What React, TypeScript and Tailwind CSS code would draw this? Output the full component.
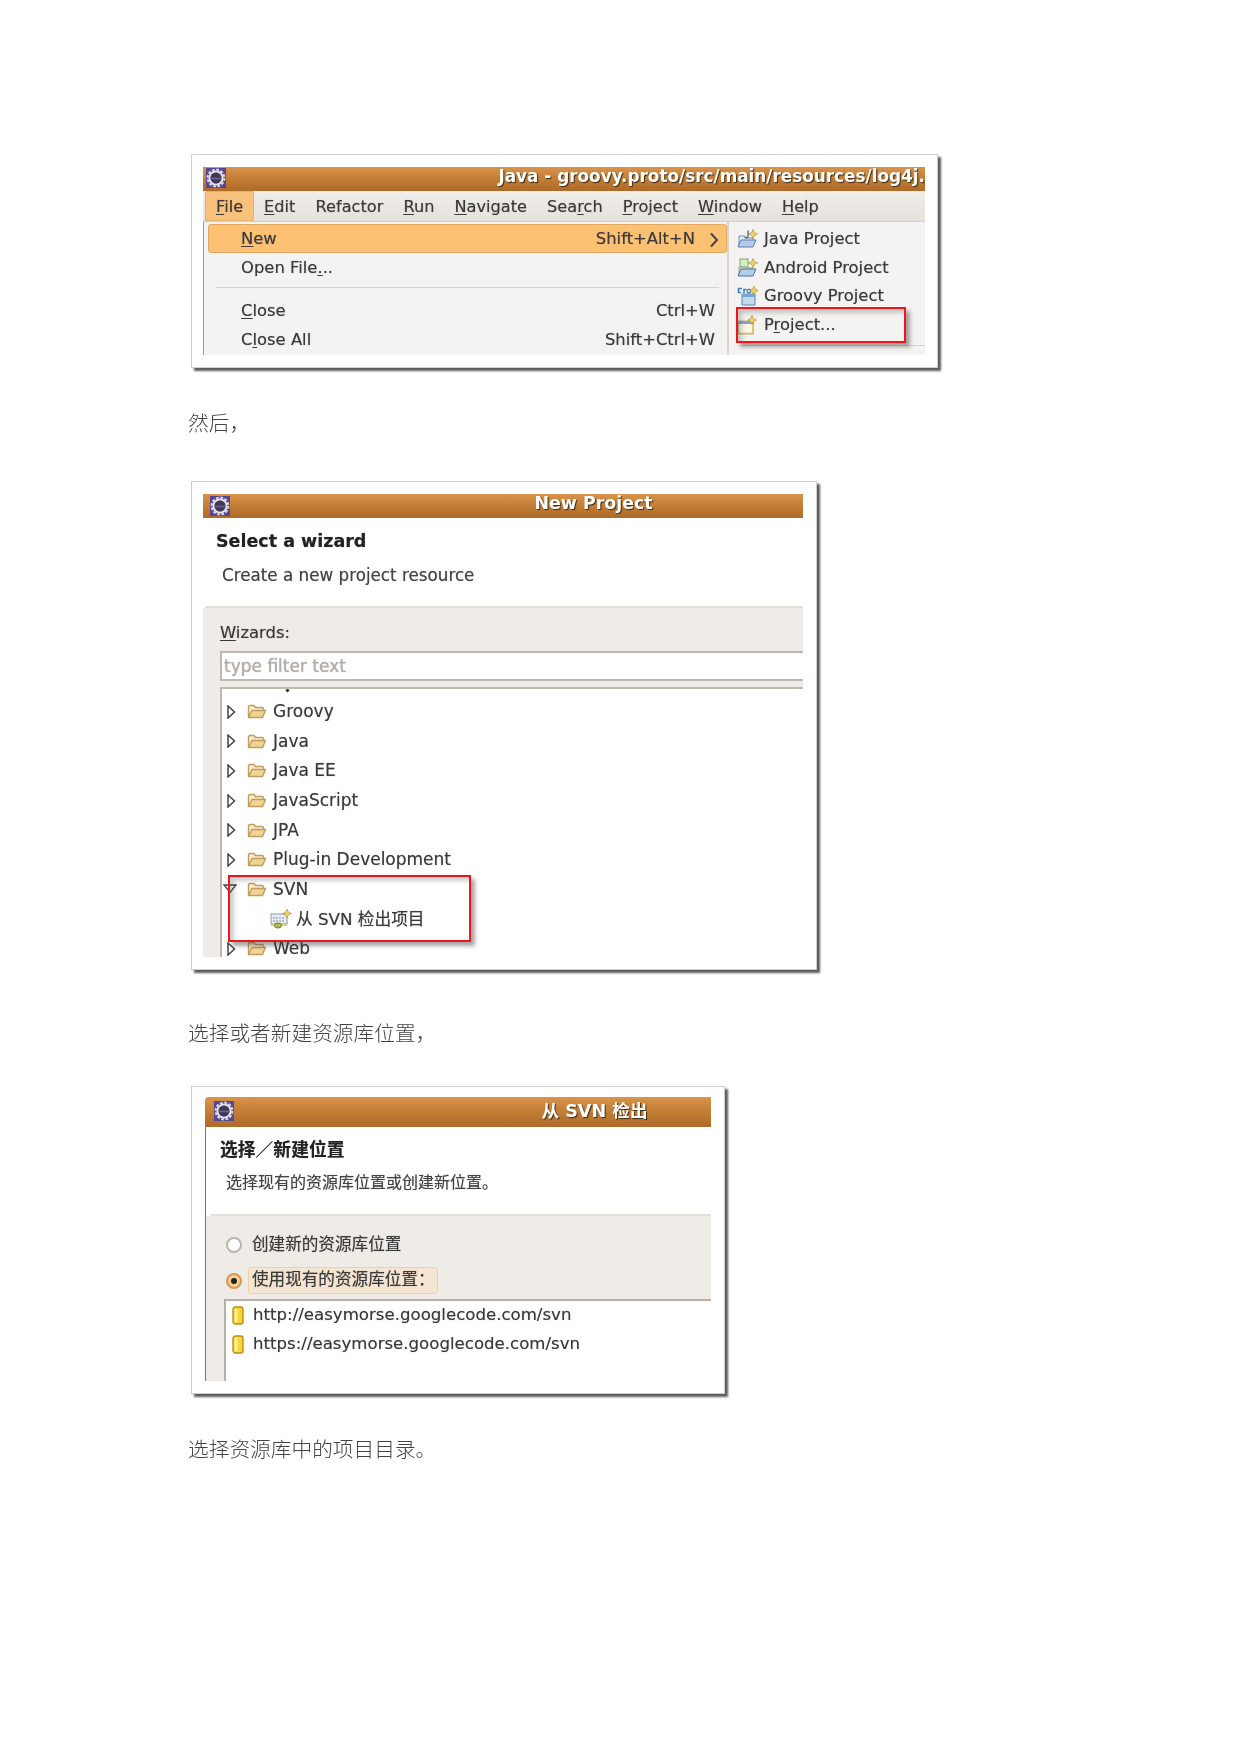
const ui = "font-['DejaVu_Sans','Noto_Sans_CJK_SC',sans-serif] [text-shadow:0_0_1px_rgba(60,60,60,0.55)]";

const GearIcon = () => (
  <svg width="20" height="20" viewBox="0 0 20 20" className="shrink-0">
    <rect width="20" height="20" fill="#5a4594" />
    <circle cx="10" cy="10" r="8.4" fill="none" stroke="#d9d9e0" strokeWidth="2" strokeDasharray="2.8 1.6" />
    <circle cx="10" cy="10" r="6.6" fill="none" stroke="#e6e6ea" strokeWidth="2" />
    <circle cx="10" cy="10" r="5.4" fill="#3d3a52" />
    <path d="M5 10.5h10" stroke="#6f609e" strokeWidth="1.6" />
  </svg>
);

const Spark = ({ x, y }: { x: number; y: number }) => (
  <path
    transform={`translate(${x} ${y})`}
    d="M0-4.5 1.4-1.4 4.5 0 1.4 1.4 0 4.5-1.4 1.4-4.5 0-1.4-1.4Z"
    fill="#f2d264"
    stroke="#a98a2e"
    strokeWidth=".6"
  />
);

const JavaProjectIcon = () => (
  <svg width="21" height="20" viewBox="0 0 21 20" className="shrink-0">
    <path d="M2 7h6l1 2h7v8H2Z" fill="#e6edf6" stroke="#6f8db5" />
    <path d="M1 18 4 11h15l-3 7Z" fill="#b5cce8" stroke="#5b7fae" />
    <path d="M11 1.5v6q0 2-3.5 1" fill="none" stroke="#4b6fa6" strokeWidth="1.5" />
    <Spark x={16} y={5} />
  </svg>
);

const AndroidProjectIcon = () => (
  <svg width="21" height="20" viewBox="0 0 21 20" className="shrink-0">
    <rect x="3" y="1" width="8" height="8" fill="#d8ecc8" stroke="#78a860" />
    <path d="M2 9h6l1 1h7v7H2Z" fill="#f0dc9a" stroke="#8a9fb8" />
    <path d="M1 18 4 11h15l-3 7Z" fill="#b5cce8" stroke="#4f72a3" />
    <Spark x={16} y={5} />
  </svg>
);

const GroovyProjectIcon = () => (
  <svg width="21" height="20" viewBox="0 0 21 20" className="shrink-0">
    <path d="M5 8h13v11H5Z" fill="#c4daf0" stroke="#5f86b2" />
    <path d="M5 8h13v3H5Z" fill="#7aa6d4" />
    <path d="M5 2.5H1.5v4H4M7 7V3.5h2.5" fill="none" stroke="#3d7fc4" strokeWidth="1.5" />
    <circle cx="12" cy="5" r="1.8" fill="none" stroke="#3d7fc4" strokeWidth="1.3" />
    <Spark x={17} y={4.5} />
  </svg>
);

const NewProjectIcon = () => (
  <svg width="21" height="20" viewBox="0 0 21 20" className="shrink-0">
    <rect x="1.5" y="6" width="15" height="13" fill="#fbf6e2" stroke="#b5b09a" />
    <rect x="1.5" y="6" width="15" height="3" fill="#8fa3bb" />
    <path d="M2 18.5h14M16 9v9" stroke="#d8c25a" strokeWidth="1.5" />
    <Spark x={15} y={5} />
  </svg>
);

const SvnIcon = () => (
  <svg width="22" height="20" viewBox="0 0 22 20" className="shrink-0">
    <rect x="1" y="5" width="16" height="10" fill="#e6edf4" stroke="#8b9aa8" />
    <path d="M3 9h12M3 12h12" stroke="#7d93ab" strokeDasharray="2 1" />
    <path d="M1 15h16v2H1Z" fill="#d6d27e" />
    <ellipse cx="8" cy="16.5" rx="3.5" ry="2.5" fill="#b4bb50" stroke="#6f7530" />
    <Spark x={17} y={4.5} />
  </svg>
);

const RepoIcon = () => (
  <svg width="12" height="19" viewBox="0 0 12 19" className="shrink-0">
    <rect x="1" y="1" width="10" height="17" rx="2.5" fill="#f6d733" stroke="#c98a18" strokeWidth="1.4" />
    <rect x="2.5" y="2.5" width="3" height="14" rx="1.5" fill="#fdf0a0" />
  </svg>
);

const FolderIcon = () => (
  <svg width="20" height="15" viewBox="0 0 20 15" className="shrink-0">
    <path d="M1.5 13V3q0-1.5 1.5-1.5h4L8.5 3.5H15q1.5 0 1.5 1.5v1" fill="#f8ebce" stroke="#c29c5c" strokeWidth="1.4" />
    <path d="M1.5 13.5 5 6.5h13.5L15.5 13.5Z" fill="#f0d496" stroke="#c29c5c" strokeWidth="1.4" strokeLinejoin="round" />
  </svg>
);

const Arrow = ({ open }: { open?: boolean }) =>
  open ? (
    <svg width="14" height="10" viewBox="0 0 14 10" className="shrink-0 ml-[-3px] mr-[2px]">
      <path d="M1 1h12L7 8.5Z" fill="#fff" stroke="#444" strokeWidth="1.3" />
    </svg>
  ) : (
    <svg width="9" height="14" viewBox="0 0 9 14" className="shrink-0 mx-[1px]">
      <path d="M1 1v12l6.5-6Z" fill="#fff" stroke="#444" strokeWidth="1.5" />
    </svg>
  );

const Mn = ({ children }: { children: string }) => (
  <span className="underline underline-offset-2">{children}</span>
);

const Shot = ({ className, children }: { className: string; children: React.ReactNode }) => (
  <div className={`border border-[#cfcfcf] bg-white shadow-[3px_3px_2px_#5c5c5c] ${className}`}>
    <div className="blur-[0.6px]">{children}</div>
  </div>
);

const TitleBar = ({ title, className }: { title: string; className: string }) => (
  <div className={`flex items-center bg-gradient-to-b from-[#d9934a] via-[#c27d36] to-[#ad6a29] ${className}`}>
    <GearIcon />
    <div className="flex-1 min-w-0 whitespace-nowrap text-center font-bold text-white [text-shadow:1px_1px_1px_#3d2a12]">
      {title}
    </div>
  </div>
);

const RedBox = ({ className }: { className: string }) => (
  <div className={`absolute border-[2px] border-[#f2141c] shadow-[4px_4px_4px_rgba(60,60,60,0.45),inset_4px_4px_4px_rgba(60,60,60,0.25)] ${className}`} />
);

const menus = [
  ["F", "ile"],
  ["E", "dit"],
  ["", "Refactor"],
  ["R", "un"],
  ["N", "avigate"],
  ["", "Sea", "r", "ch"],
  ["P", "roject"],
  ["W", "indow"],
  ["H", "elp"],
];

const submenu = [
  { icon: <JavaProjectIcon />, label: "Java Project" },
  { icon: <AndroidProjectIcon />, label: "Android Project" },
  { icon: <GroovyProjectIcon />, label: "Groovy Project" },
];

const folders = ["Groovy", "Java", "Java EE", "JavaScript", "JPA", "Plug-in Development"];

const MenuWindow = () => (
  <Shot className="w-[747px] h-[214px] px-[11px] pt-[12px]">
    <div className={`relative w-[722px] text-[16.4px] leading-none text-[#3a3a3a] ${ui}`}>
      <TitleBar
        title="Java - groovy.proto/src/main/resources/log4j."
        className="h-[24px] pl-[3px] text-[16.85px] [&>div]:pb-[6px] [&>div]:text-right [&>svg]:mb-[3px]"
      />
      <div className="flex h-[31px] items-center border-b border-[#d5cfc8] bg-gradient-to-b from-[#f1eeea] to-[#e6e1db] pl-[2px] text-[16.2px]">
        {menus.map(([mn, rest, mn2, rest2], i) => (
          <div
            key={i}
            className={`flex h-full items-center px-[10px] pt-[2px] ${i === 0 ? "rounded-t-[2px] border border-[#e9b06a] bg-[#f8c27d]" : ""}`}
          >
            <span>
              {mn && <Mn>{mn}</Mn>}
              {rest}
              {mn2 && <Mn>{mn2}</Mn>}
              {rest2}
            </span>
          </div>
        ))}
      </div>
      <div className="flex h-[133px] bg-[#f5f3f1]">
        <div className="w-[524px] border-l border-[#9a9792] pl-[4px] pt-[2px]">
          <div className="flex h-[29px] items-center rounded-[3px] border border-[#e0a860] bg-[#fcc173] pl-[32px] pt-[2px]">
            <span><Mn>N</Mn>ew</span>
            <span className="ml-auto">Shift+Alt+N</span>
            <svg width="10" height="16" viewBox="0 0 10 16" className="ml-[14px] mr-[7px]">
              <path d="M2 1.5 8 8l-6 6.5" fill="none" stroke="#444" strokeWidth="2" />
            </svg>
          </div>
          <div className="flex h-[29px] items-center pl-[33px] pt-[2px]">Open File<Mn>.</Mn>..</div>
          <div className="mx-[8px] mt-[5px] mb-[8px] h-px bg-[#d8d2cc]" />
          <div className="flex h-[29px] items-center pl-[33px] pr-[12px] pt-[2px]">
            <span><Mn>C</Mn>lose</span>
            <span className="ml-auto">Ctrl+W</span>
          </div>
          <div className="flex h-[27px] items-center pl-[33px] pr-[12px] pt-[3px]">
            <span>C<Mn>l</Mn>ose All</span>
            <span className="ml-auto">Shift+Ctrl+W</span>
          </div>
        </div>
        <div className="flex-1 border-l-[2px] border-[#d9d4cf] pl-[8px] pt-[3px]">
          {submenu.map((s) => (
            <div key={s.label} className="flex h-[28.6px] items-center gap-[6px]">
              {s.icon}
              {s.label}
            </div>
          ))}
          <div className="flex h-[28.6px] items-center gap-[6px]">
            <NewProjectIcon />
            <span>P<Mn>r</Mn>oject...</span>
          </div>
          <div className="ml-[3px] mt-[6px] h-px bg-[#d8d2cc]" />
        </div>
      </div>
      <RedBox className="left-[533px] top-[140px] h-[36px] w-[170px]" />
    </div>
  </Shot>
);

const WizardWindow = () => (
  <Shot className="w-[626px] h-[489px] px-[11px] pt-[12px]">
    <div className={`relative w-[600px] text-[17px] leading-none text-[#3a3a3a] ${ui}`}>
      <TitleBar title="New Project" className="h-[24px] pl-[7px] text-[17.4px] [&>div]:pb-[5px] [&>div]:pl-[154px] [&>svg]:mb-[1px]" />
      <div className="ml-[2px] h-[90px] border-b-[2px] border-[#e2ded9] pl-[11px] pt-[15px]">
        <div className="text-[17.5px] font-bold text-[#222]">Select a wizard</div>
        <div className="mt-[16px] pl-[6px] text-[16.75px] text-[#444]">Create a new project resource</div>
      </div>
      <div className="bg-[#efebe7] pl-[17px]">
        <div className="h-[43px] pt-[17px] text-[16.4px]"><Mn>W</Mn>izards:</div>
        <div className="flex h-[30px] items-center border-y-[2px] border-l-[2px] border-[#bdb8b0] bg-white pl-[2px] text-[#b5b0a8]">
          type filter text
        </div>
        <div className="mt-[6px] h-[270px] overflow-hidden border-t-[2px] border-l-[2px] border-[#bdb8b0] bg-white pl-[4px]">
          <div className="h-[8px]">
            <div className="ml-[60px] h-[3px] w-[3px] rotate-45 bg-[#333]" />
          </div>
          {folders.map((f) => (
            <div key={f} className="flex h-[29.6px] items-center">
              <Arrow />
              <span className="ml-[10px]"><FolderIcon /></span>
              <span className="ml-[6px]">{f}</span>
            </div>
          ))}
          <div className="flex h-[29.6px] items-center">
            <Arrow open />
            <span className="ml-[8px]"><FolderIcon /></span>
            <span className="ml-[6px]">SVN</span>
          </div>
          <div className="flex h-[29.6px] items-center pl-[44px]">
            <SvnIcon />
            <span className="ml-[4px] text-[16.7px]">从 SVN 检出项目</span>
          </div>
          <div className="flex h-[29.6px] items-center">
            <Arrow />
            <span className="ml-[10px]"><FolderIcon /></span>
            <span className="ml-[6px]">Web</span>
          </div>
        </div>
      </div>
      <RedBox className="left-[25px] top-[381px] h-[67px] w-[243px]" />
    </div>
  </Shot>
);

const CheckoutWindow = () => (
  <Shot className="w-[534px] h-[308px] pl-[13px] pt-[10px]">
    <div className={`w-[506px] text-[16px] leading-none text-[#3a3a3a] ${ui}`}>
      <TitleBar title="从 SVN 检出" className="h-[30px] rounded-tl-[4px] pl-[9px] text-[17.6px] [&>div]:pl-[244px] [&>svg]:mb-[2px]" />
      <div className="border-l border-[#777]">
        <div className="ml-[5px] h-[89px] border-b-[2px] border-[#e2ded9] bg-white pl-[9px] pt-[14px]">
          <div className="text-[17.8px] font-bold text-[#222]">选择／新建位置</div>
          <div className="mt-[16px] pl-[6px] text-[#444]">选择现有的资源库位置或创建新位置。</div>
        </div>
        <div className="h-[83px] bg-[#efebe7] pl-[20px] pt-[21px] pr-[4px]">
          <div className="flex h-[16px] items-center text-[16.6px]">
            <span className="h-[16px] w-[16px] rounded-full border-[2px] border-[#b9b4ac] bg-white" />
            <span className="ml-[10px]">创建新的资源库位置</span>
          </div>
          <div className="mt-[14px] flex h-[27px] items-center text-[16.6px]">
            <span className="flex h-[16px] w-[16px] items-center justify-center rounded-full border-[2px] border-[#d39a52] bg-[#f6cf97]">
              <span className="h-[6px] w-[6px] rounded-full bg-[#222]" />
            </span>
            <span className="ml-[6px] flex h-[27px] items-center rounded-[3px] border border-[#f1cf9f] bg-[#f5e6d2] pl-[3px] pr-[2px]">
              使用现有的资源库位置：
            </span>
          </div>
        </div>
        <div className="flex h-[82px]">
          <div className="w-[18px] bg-[#efebe7]" />
          <div className="flex-1 border-t-[2px] border-l-[2px] border-[#b6b0a8] pl-[6px] text-[16.6px]">
            {["http://easymorse.googlecode.com/svn", "https://easymorse.googlecode.com/svn"].map((u) => (
              <div key={u} className="flex h-[29px] items-center gap-[9px]">
                <RepoIcon />
                {u}
              </div>
            ))}
          </div>
        </div>
      </div>
    </div>
  </Shot>
);

const Caption = ({ className, children }: { className: string; children: string }) => (
  <p className={`ml-[-3px] h-[20px] font-['Noto_Sans_CJK_SC',serif] text-[20.7px] font-light leading-[20px] text-[#444] blur-[0.3px] ${className}`}>
    {children}
  </p>
);

export default function App() {
  return (
    <div className="min-h-[1754px] w-[1241px] bg-white pl-[191px] pt-[154px]">
      <div className="relative">
        <MenuWindow />
        <Caption className="mt-[44px]">然后，</Caption>
        <div className="mt-[49px]"><WizardWindow /></div>
        <Caption className="mt-[52px]">选择或者新建资源库位置，</Caption>
        <div className="mt-[44px]"><CheckoutWindow /></div>
        <Caption className="mt-[44px]">选择资源库中的项目目录。</Caption>
      </div>
    </div>
  );
}
